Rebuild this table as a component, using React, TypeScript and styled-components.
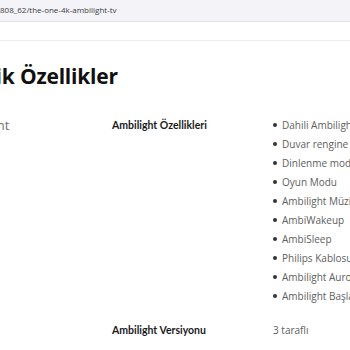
import styled, { createGlobalStyle } from "styled-components";

const GlobalStyle = createGlobalStyle`
  html, body {
    margin: 0;
    padding: 0;
    background: #ffffff;
    overflow: hidden;
  }
  body {
    font-family: "Open Sans", "Noto Sans", sans-serif;
  }
`;

const features = [
  "Dahili Ambilight+hue",
  "Duvar rengine uyarlanan",
  "Dinlenme modu",
  "Oyun Modu",
  "Ambilight Müzik",
  "AmbiWakeup",
  "AmbiSleep",
  "Philips Kablosuz Ev Hoparlörleri",
  "Ambilight Aurora",
  "Ambilight Başlangıç",
];

export default function App() {
  return (
    <Window>
      <GlobalStyle />
      <AddressBar>
        <Url>808_62/the-one-4k-ambilight-tv</Url>
      </AddressBar>
      <Toolbar />
      <Page>
        <Heading>Teknik Özellikler</Heading>
        <SpecTable>
          <Group>Ambient</Group>
          <Label>Ambilight Özellikleri</Label>
          <List>
            {features.map((f) => (
              <Item key={f}>{f}</Item>
            ))}
          </List>
          <span />
          <Label>Ambilight Versiyonu</Label>
          <Value>3 taraflı</Value>
        </SpecTable>
      </Page>
    </Window>
  );
}

const Window = styled.div`
  width: 350px;
  height: 350px;
  overflow: hidden;
  display: flex;
  flex-direction: column;
`;

const AddressBar = styled.div`
  height: 21px;
  background: #f4f3f8;
  border-bottom: 1px solid #e3e2e8;
  display: flex;
  align-items: center;
  flex-shrink: 0;
`;

const Url = styled.span`
  font-size: 8px;
  color: #3c3c44;
  white-space: nowrap;
  padding-bottom: 3px;
`;

const Toolbar = styled.div`
  height: 18px;
  border-bottom: 1px solid #ececee;
  flex-shrink: 0;
`;

const Page = styled.div`
  margin-left: -42px;
  white-space: nowrap;
`;

const Heading = styled.h1`
  margin: 18px 0 0 -13px;
  font-size: 21px;
  font-weight: 700;
  color: #111111;
  line-height: 34px;
  letter-spacing: -0.2px;
`;

const SpecTable = styled.div`
  display: grid;
  grid-template-columns: 154px 161px 1fr;
  row-gap: 16px;
  margin-top: 23px;
`;

const Group = styled.div`
  font-size: 13px;
  color: #707070;
  line-height: 18px;
`;

const Label = styled.div`
  font-family: "Lato", "Open Sans", sans-serif;
  font-size: 10.5px;
  font-weight: 700;
  color: #1b1b1b;
  line-height: 18px;
`;

const List = styled.ul`
  margin: 0;
  padding: 0;
  list-style: none;
  display: flex;
  flex-direction: column;
  gap: 1px;
`;

const Item = styled.li`
  font-size: 10px;
  color: #606060;
  line-height: 18px;
  display: flex;
  align-items: center;
  gap: 5px;
  &::before {
    content: "";
    width: 4px;
    height: 4px;
    border-radius: 50%;
    background: #333333;
    flex-shrink: 0;
  }
`;

const Value = styled.div`
  font-size: 10px;
  color: #606060;
  line-height: 18px;
`;
